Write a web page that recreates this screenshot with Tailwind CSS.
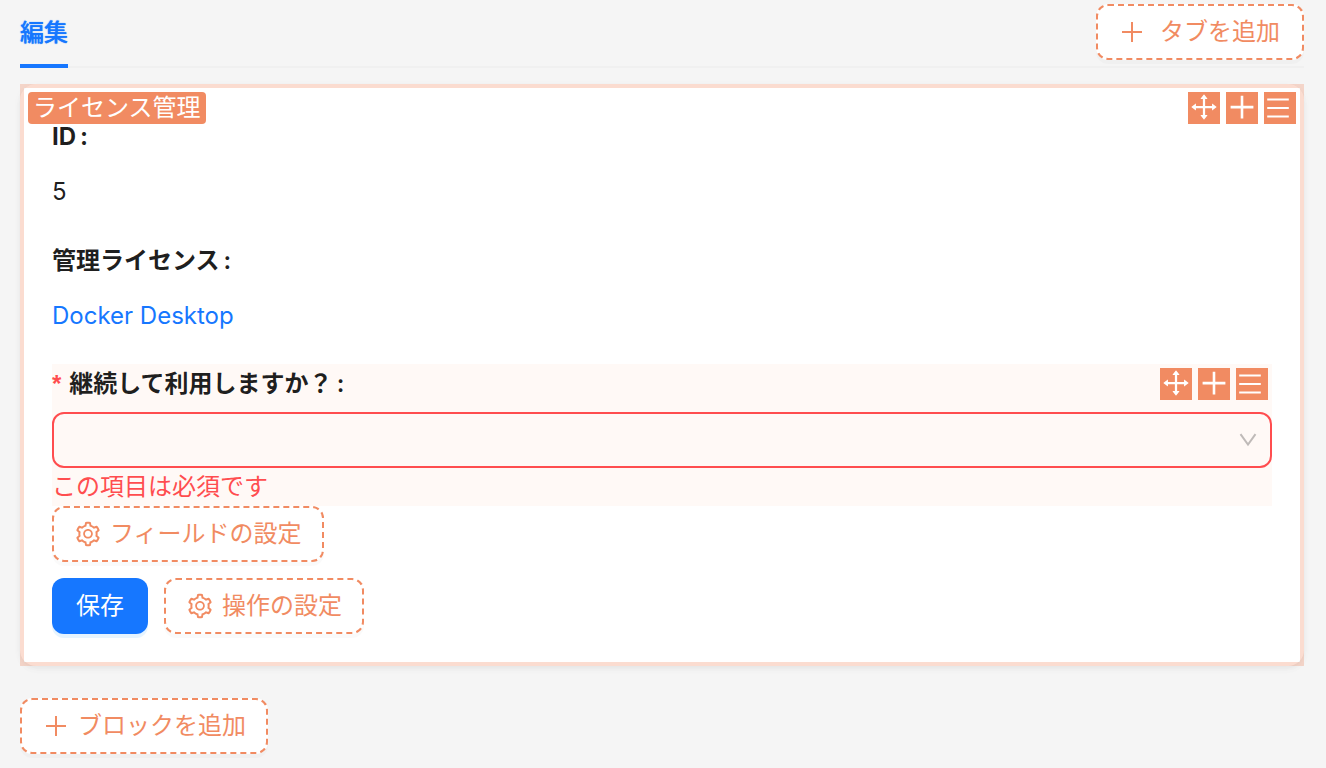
<!DOCTYPE html>
<html lang="ja">
<head>
<meta charset="utf-8">
<meta name="viewport" content="width=device-width, initial-scale=1">
<title>ライセンス管理</title>
<script src="https://cdn.jsdelivr.net/npm/@tailwindcss/browser@4"></script>
</head>
<body class="min-h-screen bg-[#f5f5f5] font-['Inter','Noto_Sans_CJK_JP',sans-serif] text-2xl text-black/88">
<svg class="hidden" aria-hidden="true">
  <symbol id="gear" viewBox="0 0 1024 1024"><path d="M924.8 625.7l-65.5-56c3.1-19 4.7-38.4 4.7-57.8s-1.6-38.8-4.7-57.8l65.5-56a32.03 32.03 0 009.3-35.2l-.9-2.6a443.74 443.74 0 00-79.7-137.9l-1.8-2.1a32.12 32.12 0 00-35.1-9.5l-81.3 28.9c-30-24.6-63.5-44-99.7-57.6l-15.7-85a32.05 32.05 0 00-25.8-25.7l-2.7-.5c-52.1-9.4-106.9-9.4-159 0l-2.7.5a32.05 32.05 0 00-25.8 25.7l-15.8 85.4a351.86 351.86 0 00-99 57.4l-81.9-29.1a32 32 0 00-35.1 9.5l-1.8 2.1a446.02 446.02 0 00-79.7 137.9l-.9 2.6c-4.5 12.5-.8 26.5 9.3 35.2l66.3 56.6c-3.1 18.8-4.6 38-4.6 57.1 0 19.2 1.5 38.4 4.6 57.1L99 625.5a32.03 32.03 0 00-9.3 35.2l.9 2.6c18.1 50.4 44.9 96.9 79.7 137.9l1.8 2.1a32.12 32.12 0 0035.1 9.5l81.9-29.1c29.8 24.5 63.1 43.9 99 57.4l15.8 85.4a32.05 32.05 0 0025.8 25.7l2.7.5a449.4 449.4 0 00159 0l2.7-.5a32.05 32.05 0 0025.8-25.7l15.7-85a350 350 0 0099.7-57.6l81.3 28.9a32 32 0 0035.1-9.5l1.8-2.1c34.8-41.1 61.6-87.5 79.7-137.9l.9-2.6c4.5-12.3.8-26.3-9.3-35zM788.3 465.9c2.5 15.1 3.8 30.6 3.8 46.1s-1.3 31-3.8 46.1l-6.6 40.1 74.7 63.9a370.03 370.03 0 01-42.6 73.6L721 702.8l-31.4 25.8c-23.9 19.6-50.5 35-79.3 45.8l-38.1 14.3-17.9 97a377.5 377.5 0 01-85 0l-17.9-97.2-37.8-14.5c-28.5-10.8-55-26.2-78.7-45.7l-31.4-25.9-93.4 33.2c-17-22.9-31.2-47.6-42.6-73.6l75.5-64.5-6.5-40c-2.4-14.9-3.7-30.3-3.7-45.5 0-15.3 1.2-30.6 3.7-45.5l6.5-40-75.5-64.5c11.3-26.1 25.6-50.7 42.6-73.6l93.4 33.2 31.4-25.9c23.7-19.5 50.2-34.9 78.7-45.7l37.9-14.3 17.9-97.2c28.1-3.2 56.8-3.2 85 0l17.9 97 38.1 14.3c28.7 10.8 55.4 26.2 79.3 45.8l31.4 25.8 92.8-32.9c17 22.9 31.2 47.6 42.6 73.6L781.8 426l6.5 39.9zM512 326c-97.2 0-176 78.8-176 176s78.8 176 176 176 176-78.8 176-176-78.8-176-176-176zm79.2 255.2A111.6 111.6 0 01512 614c-29.9 0-58-11.7-79.2-32.8A111.6 111.6 0 01400 502c0-29.9 11.7-58 32.8-79.2C454 401.6 482.1 390 512 390c29.9 0 58 11.6 79.2 32.8A111.6 111.6 0 01624 502c0 29.9-11.7 58-32.8 79.2z" fill="currentColor"/></symbol>
  <symbol id="plus" viewBox="0 0 28 28"><path d="M14 4v20M4 14h20" fill="none" stroke="currentColor" stroke-width="2"/></symbol>
  <symbol id="tool-drag" viewBox="0 0 32 32"><path transform="translate(0 -1) scale(.03125)" d="M909.3 506.3L781.7 405.6a7.23 7.23 0 00-11.7 5.7V476H548V254h64.8c6 0 9.4-7 5.7-11.7L517.7 114.7a7.14 7.14 0 00-11.3 0L405.6 242.3a7.23 7.23 0 005.7 11.7H476v222H254v-64.8c0-6-7-9.4-11.7-5.7L114.7 506.3a7.14 7.14 0 000 11.3l127.5 100.8c4.7 3.7 11.7.4 11.7-5.7V548h222v222h-64.8c-6 0-9.4 7-5.7 11.7l100.8 127.5c2.9 3.7 8.5 3.7 11.3 0l100.8-127.5c3.7-4.7.4-11.7-5.7-11.7H548V548h222v64.8c0 6 7 9.4 11.7 5.7l127.5-100.8a7.3 7.3 0 00.1-11.4z" fill="currentColor"/></symbol>
  <symbol id="tool-plus" viewBox="0 0 32 32"><path d="M16 3.8v22.6M4.6 15.1h22.8" fill="none" stroke="currentColor" stroke-width="2.6"/></symbol>
  <symbol id="tool-menu" viewBox="0 0 32 32"><path d="M3.2 7.5h21.6M3.2 16h21.6M3.2 24.5h21.6" fill="none" stroke="currentColor" stroke-width="2.2"/></symbol>
</svg>

<div class="px-5 pr-[22px] pb-[14px]">
  <header class="flex h-[68px] items-start justify-between border-b-2 border-[#f0f0f0]">
    <nav class="h-[68px]">
      <a href="#edit" aria-current="page" class="flex h-[68px] border-b-4 border-[#1677ff] leading-[66px] font-medium text-[#1677ff] [text-shadow:0_0_1px_currentColor]">編集</a>
    </nav>
    <button type="button" class="mt-1 flex h-14 items-center gap-[14px] rounded-xl border-2 border-dashed border-[#f18b62] bg-white pr-[22px] pl-5 leading-8 text-[#f18b62] shadow-[0_4px_0_rgba(0,0,0,0.02)]">
      <svg class="size-7" aria-hidden="true"><use href="#plus"/></svg>タブを追加
    </button>
  </header>

  <main class="relative mt-4 rounded-2xl bg-white p-8 shadow-[0_2px_4px_rgba(0,0,0,0.03),0_2px_12px_-2px_rgba(0,0,0,0.04),0_4px_8px_rgba(0,0,0,0.02)]">
    <div class="pointer-events-none absolute inset-0 border-4 border-[#f18b62]/30"></div>
    <span class="absolute top-2 left-2 rounded bg-[#f18b62] px-[5px] leading-8 text-white">ライセンス管理</span>
    <div class="absolute top-2 right-2 flex gap-1.5 text-white">
      <button type="button" aria-label="移動" class="size-8 bg-[#f18b62]"><svg class="size-8"><use href="#tool-drag"/></svg></button>
      <button type="button" aria-label="追加" class="size-8 bg-[#f18b62]"><svg class="size-8"><use href="#tool-plus"/></svg></button>
      <button type="button" aria-label="メニュー" class="size-8 bg-[#f18b62]"><svg class="size-8"><use href="#tool-menu"/></svg></button>
    </div>

    <form>
      <dl>
        <dt class="leading-[42px] font-bold">ID<span class="ml-1">:</span></dt>
        <dd class="mt-2 mb-[22px] leading-[52px]">5</dd>
        <dt class="leading-[42px] font-semibold">管理ライセンス<span class="ml-1">:</span></dt>
        <dd class="mt-2 mb-[22px] leading-[52px]"><a href="#docker-desktop" class="text-[#1677ff]">Docker Desktop</a></dd>
      </dl>

      <div class="relative bg-[#fff9f6]">
        <label for="continue" class="flex h-10 items-center leading-10 font-semibold"><span class="mr-2 font-['Liberation_Sans',sans-serif] font-bold text-[#ff4d4f]">*</span>継続して利用しますか？<span class="ml-1">:</span></label>
        <div class="absolute top-1 right-1 flex gap-1.5 text-white">
          <button type="button" aria-label="移動" class="size-8 bg-[#f18b62]"><svg class="size-8"><use href="#tool-drag"/></svg></button>
          <button type="button" aria-label="追加" class="size-8 bg-[#f18b62]"><svg class="size-8"><use href="#tool-plus"/></svg></button>
          <button type="button" aria-label="メニュー" class="size-8 bg-[#f18b62]"><svg class="size-8"><use href="#tool-menu"/></svg></button>
        </div>
        <div class="relative mt-2">
          <select id="continue" required aria-invalid="true" aria-describedby="continue-error" class="block h-14 w-full appearance-none rounded-xl border-2 border-[#ff4d4f] bg-transparent px-5"><option value=""></option></select>
          <svg class="pointer-events-none absolute top-4 right-3 size-6 text-black/25" viewBox="0 0 24 24" fill="none" stroke="currentColor" stroke-width="2" aria-hidden="true"><path d="M4.5 6.2l7.5 10.3l7.5-10.3"/></svg>
        </div>
        <p id="continue-error" class="leading-[38px] text-[#ff4d4f]">この項目は必須です</p>
      </div>

      <button type="button" class="flex h-14 items-center gap-2 rounded-xl border-2 border-dashed border-[#f18b62] bg-white px-5 leading-8 text-[#f18b62] shadow-[0_4px_0_rgba(0,0,0,0.02)]">
        <svg class="size-7" aria-hidden="true"><use href="#gear"/></svg>フィールドの設定
      </button>
      <div class="mt-4 flex gap-4">
        <button type="submit" class="h-14 rounded-xl bg-[#1677ff] px-6 leading-8 text-white shadow-[0_4px_0_rgba(5,145,255,0.1)]">保存</button>
        <button type="button" class="flex h-14 items-center gap-2 rounded-xl border-2 border-dashed border-[#f18b62] bg-white px-5 leading-8 text-[#f18b62] shadow-[0_4px_0_rgba(0,0,0,0.02)]">
          <svg class="size-7" aria-hidden="true"><use href="#gear"/></svg>操作の設定
        </button>
      </div>
    </form>
  </main>

  <button type="button" class="mt-8 flex h-14 items-center gap-2 rounded-xl border-2 border-dashed border-[#f18b62] bg-white px-5 leading-8 text-[#f18b62] shadow-[0_4px_0_rgba(0,0,0,0.02)]">
    <svg class="size-7" aria-hidden="true"><use href="#plus"/></svg>ブロックを追加
  </button>
</div>
</body>
</html>
